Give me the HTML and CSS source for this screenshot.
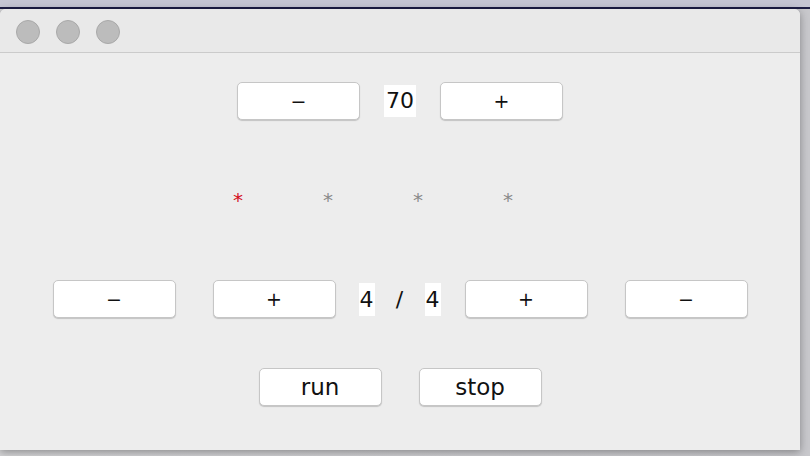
FILE: index.html
```html
<!DOCTYPE html>
<html>
<head>
<meta charset="utf-8">
<link rel="stylesheet" href="styles.css">
</head>
<body>
<div class="desktop">
  <div class="menubar"></div>
  <div class="window">
    <div class="titlebar">
      <span class="light"></span>
      <span class="light"></span>
      <span class="light"></span>
    </div>
    <div class="content">
      <div class="row row-tempo">
        <button class="btn sym">−</button>
        <span class="value value-tempo">70</span>
        <button class="btn sym">+</button>
      </div>
      <div class="stars">
        <span class="star active">*</span>
        <span class="star">*</span>
        <span class="star">*</span>
        <span class="star">*</span>
      </div>
      <div class="row row-meter">
        <button class="btn sym">−</button>
        <button class="btn sym">+</button>
        <span class="value value-beat">4</span>
        <span class="slash">/</span>
        <span class="value value-beat">4</span>
        <button class="btn sym">+</button>
        <button class="btn sym">−</button>
      </div>
      <div class="row row-run">
        <button class="btn">run</button>
        <button class="btn">stop</button>
      </div>
    </div>
  </div>
</div>
</body>
</html>
```
FILE: styles.css
```css
html, body {
  margin: 0;
  padding: 0;
}
body {
  width: 810px;
  height: 456px;
  overflow: hidden;
  background: #cfcfd2;
  font-family: "DejaVu Sans", "Liberation Sans", sans-serif;
}
.desktop {
  position: relative;
  width: 810px;
  height: 456px;
  background: linear-gradient(to right, #d4d4d6 0, #c8c8cc 100%);
}
.menubar {
  height: 7px;
  background: #c5c5d3;
  border-bottom: 2px solid #1d1d45;
}
.window {
  position: absolute;
  top: 9px;
  left: 0;
  width: 800px;
  height: 441px;
  background: #ededed;
  border-radius: 6px 6px 0 0;
  box-shadow: 0 2px 8px rgba(0, 0, 0, 0.35);
  overflow: hidden;
}
.titlebar {
  height: 44px;
  box-sizing: border-box;
  background: #e9e9e9;
  border-bottom: 1px solid #cbcbcb;
  display: flex;
  align-items: center;
  padding-left: 16px;
  padding-top: 3px;
  gap: 16px;
}
.light {
  width: 24px;
  height: 24px;
  box-sizing: border-box;
  border-radius: 50%;
  background: #bcbcbc;
  border: 1px solid #a9a9a9;
}
.content {
  display: flex;
  flex-direction: column;
  align-items: stretch;
}
.row {
  display: flex;
  justify-content: center;
  align-items: center;
  height: 38px;
}
.row-tempo {
  margin-top: 29px;
  gap: 24px;
}
.row-meter {
  margin-top: 74px;
}
.row-run {
  margin-top: 50px;
  gap: 37px;
}
.btn {
  width: 123px;
  height: 38px;
  box-sizing: border-box;
  background: #ffffff;
  border: 1px solid #c6c6c6;
  border-radius: 5px;
  box-shadow: 0 1px 1px rgba(0, 0, 0, 0.18);
  font-family: "DejaVu Sans", "Liberation Sans", sans-serif;
  font-size: 23px;
  color: #111;
  padding: 0;
  margin: 0;
}
.btn.sym {
  font-size: 19px;
}
.value {
  background: #ffffff;
  color: #111;
  font-size: 22px;
  line-height: 33px;
  text-align: center;
}
.value-tempo {
  width: 32px;
  height: 32px;
  line-height: 32px;
}
.value-beat {
  width: 16px;
  height: 33px;
}
.row-meter .btn:nth-child(2) {
  margin-left: 37px;
  margin-right: 23px;
}
.row-meter .btn:nth-child(6) {
  margin-left: 24px;
}
.row-meter .btn:nth-child(7) {
  margin-left: 37px;
}
.slash {
  font-size: 22px;
  color: #111;
  width: 50px;
  text-align: center;
}
.stars {
  display: flex;
  height: 20px;
  margin-top: 66px;
  padding-left: 233px;
  gap: 80px;
}
.star {
  width: 10px;
  text-align: center;
  font-size: 20px;
  line-height: 28px;
  color: #8a8a8a;
}
.star.active {
  color: #d4101c;
}
```
